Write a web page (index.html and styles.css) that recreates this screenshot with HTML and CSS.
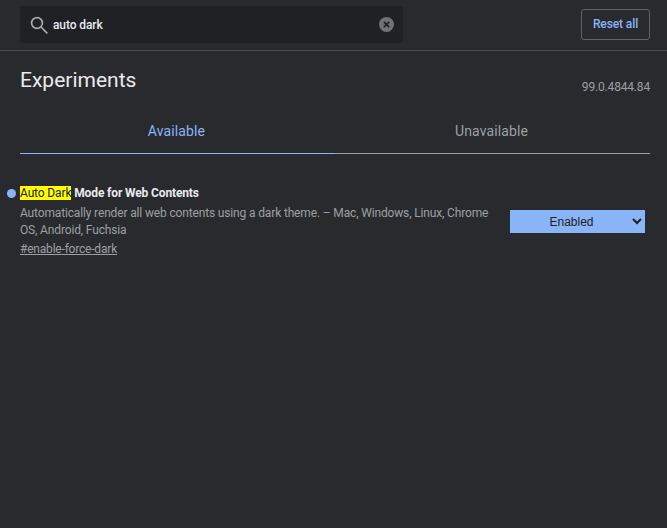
FILE: index.html
```html
<!DOCTYPE html>
<html lang="en">
<head>
<meta charset="utf-8">
<title>Experiments</title>
<link rel="stylesheet" href="styles.css">
</head>
<body>
<header class="topbar">
  <div class="search">
    <svg class="search-icon" width="18" height="18" viewBox="0 0 18 18" fill="none" stroke="#a6a9ad" stroke-width="1.7"><circle cx="7" cy="7" r="5.4"/><path d="M11 11l6.3 6.3"/></svg>
    <span class="search-text">auto dark</span>
    <svg class="clear-icon" width="15" height="15" viewBox="0 0 15 15"><circle cx="7.5" cy="7.5" r="7.5" fill="#6f7276"/><path d="M4.8 4.8l5.4 5.4M10.2 4.8l-5.4 5.4" stroke="#202124" stroke-width="1.7"/></svg>
  </div>
  <button class="reset">Reset all</button>
</header>
<main class="content">
  <div class="title-row">
    <h1>Experiments</h1>
    <span class="version">99.0.4844.84</span>
  </div>
  <nav class="tabs">
    <div class="tab active">Available</div>
    <div class="tab">Unavailable</div>
  </nav>
  <section class="flag">
    <div class="flag-text">
      <h2 class="flag-name"><span class="dot"></span><mark>Auto Dark</mark> Mode for Web Contents</h2>
      <p class="flag-desc">Automatically render all web contents using a dark theme. – Mac, Windows, Linux, Chrome OS, Android, Fuchsia</p>
      <a class="flag-link">#enable-force-dark</a>
    </div>
    <select class="flag-select"><option>Enabled</option></select>
  </section>
</main>
</body>
</html>
```
FILE: styles.css
```css
* { box-sizing: border-box; }
html, body { margin: 0; height: 100%; }
body {
  background: #292a2d;
  color: #e8eaed;
  font-family: Roboto, sans-serif;
  overflow: hidden;
}
.topbar {
  height: 51px;
  display: flex;
  align-items: flex-start;
  justify-content: space-between;
  padding: 6px 17px 0 20px;
  border-bottom: 1px solid #494b4e;
}
.search {
  width: 383px;
  height: 37px;
  background: #202124;
  border-radius: 3px;
  display: flex;
  align-items: center;
  padding: 0 9px 0 10px;
}
.search-icon { flex: none; margin-top: 1px; }
.search-text {
  flex: 1;
  margin-left: 5px;
  font-size: 12px;
  font-weight: 500;
  letter-spacing: -0.1px;
  color: #e8eaed;
}
.clear-icon { flex: none; }
.reset {
  width: 69px;
  height: 31px;
  margin-top: 3px;
  background: transparent;
  border: 1px solid #5f6368;
  border-radius: 3px;
  color: #8ab4f8;
  font: 500 12px Roboto, sans-serif;
  letter-spacing: -0.1px;
  padding: 0 0 2px;
}
.content { padding: 0 17px 0 20px; }
.title-row {
  display: flex;
  justify-content: space-between;
  align-items: flex-start;
  height: 60px;
}
h1 {
  margin: 16px 0 0;
  font-size: 21px;
  line-height: 26px;
  font-weight: 400;
  color: #e8eaed;
}
.version {
  margin-top: 28px;
  font-size: 12px;
  line-height: 16px;
  letter-spacing: -0.17px;
  color: #9aa0a6;
}
.tabs {
  display: flex;
  height: 43px;
  border-bottom: 1px solid #9aa0a6;
}
.tab {
  flex: 1;
  text-align: center;
  font-size: 14px;
  line-height: 20px;
  letter-spacing: 0.12px;
  padding: 10px 2px 0 0;
  color: #9aa0a6;
  margin-bottom: -1px;
}
.tab.active {
  color: #8ab4f8;
  border-bottom: 1px solid #8ab4f8;
}
.flag {
  display: flex;
  justify-content: space-between;
  align-items: flex-start;
  margin-top: 31px;
  padding-right: 5px;
}
.flag-text { width: 480px; }
.flag-name {
  position: relative;
  margin: 0;
  font-size: 12px;
  line-height: 16px;
  font-weight: 700;
  letter-spacing: -0.13px;
  color: #e8eaed;
}
.dot {
  position: absolute;
  left: -13px;
  top: 4px;
  width: 9px;
  height: 9px;
  border-radius: 50%;
  background: #8ab4f8;
}
mark {
  background: #ffff00;
  color: #202124;
  font-weight: 400;
}
.flag-desc {
  margin: 4px 0 0;
  font-size: 12px;
  line-height: 17px;
  letter-spacing: -0.15px;
  color: #9aa0a6;
}
.flag-link {
  display: block;
  margin-top: 2px;
  font-size: 12px;
  line-height: 16px;
  letter-spacing: -0.2px;
  color: #9aa0a6;
  text-decoration: underline;
}
.flag-select {
  width: 135px;
  height: 23px;
  margin-top: 25px;
  background: #8ab4f8;
  border: none;
  border-radius: 0;
  color: #202124;
  font: 12px "Liberation Sans", Arial, sans-serif;
  text-align: center;
}
```
